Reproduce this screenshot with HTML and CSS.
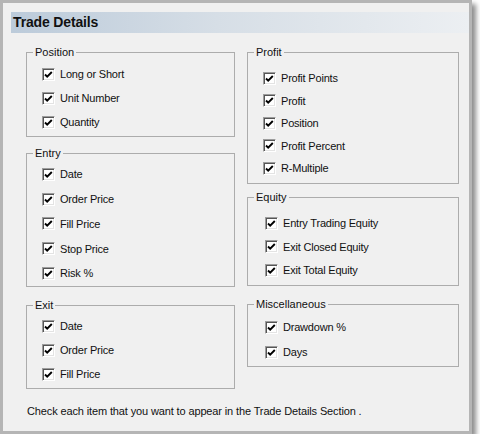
FILE: index.html
```html
<!DOCTYPE html>
<html>
<head>
<meta charset="utf-8">
<link rel="stylesheet" href="styles.css">
</head>
<body>
<div class="window">
  <div class="header">Trade Details</div>
  <div class="columns">
    <div class="col col-left">
      <fieldset class="group g-position">
        <legend>Position</legend>
        <div class="row"><span class="cb"><svg viewBox="0 0 13 13" width="13" height="13"><path d="M3 6.5 L5.2 8.7 L9.8 4" /></svg></span>Long or Short</div>
        <div class="row"><span class="cb"><svg viewBox="0 0 13 13" width="13" height="13"><path d="M3 6.5 L5.2 8.7 L9.8 4" /></svg></span>Unit Number</div>
        <div class="row"><span class="cb"><svg viewBox="0 0 13 13" width="13" height="13"><path d="M3 6.5 L5.2 8.7 L9.8 4" /></svg></span>Quantity</div>
      </fieldset>
      <fieldset class="group g-entry">
        <legend>Entry</legend>
        <div class="row"><span class="cb"><svg viewBox="0 0 13 13" width="13" height="13"><path d="M3 6.5 L5.2 8.7 L9.8 4" /></svg></span>Date</div>
        <div class="row"><span class="cb"><svg viewBox="0 0 13 13" width="13" height="13"><path d="M3 6.5 L5.2 8.7 L9.8 4" /></svg></span>Order Price</div>
        <div class="row"><span class="cb"><svg viewBox="0 0 13 13" width="13" height="13"><path d="M3 6.5 L5.2 8.7 L9.8 4" /></svg></span>Fill Price</div>
        <div class="row"><span class="cb"><svg viewBox="0 0 13 13" width="13" height="13"><path d="M3 6.5 L5.2 8.7 L9.8 4" /></svg></span>Stop Price</div>
        <div class="row"><span class="cb"><svg viewBox="0 0 13 13" width="13" height="13"><path d="M3 6.5 L5.2 8.7 L9.8 4" /></svg></span>Risk %</div>
      </fieldset>
      <fieldset class="group g-exit">
        <legend>Exit</legend>
        <div class="row"><span class="cb"><svg viewBox="0 0 13 13" width="13" height="13"><path d="M3 6.5 L5.2 8.7 L9.8 4" /></svg></span>Date</div>
        <div class="row"><span class="cb"><svg viewBox="0 0 13 13" width="13" height="13"><path d="M3 6.5 L5.2 8.7 L9.8 4" /></svg></span>Order Price</div>
        <div class="row"><span class="cb"><svg viewBox="0 0 13 13" width="13" height="13"><path d="M3 6.5 L5.2 8.7 L9.8 4" /></svg></span>Fill Price</div>
      </fieldset>
    </div>
    <div class="col col-right">
      <fieldset class="group g-profit">
        <legend>Profit</legend>
        <div class="row"><span class="cb"><svg viewBox="0 0 13 13" width="13" height="13"><path d="M3 6.5 L5.2 8.7 L9.8 4" /></svg></span>Profit Points</div>
        <div class="row"><span class="cb"><svg viewBox="0 0 13 13" width="13" height="13"><path d="M3 6.5 L5.2 8.7 L9.8 4" /></svg></span>Profit</div>
        <div class="row"><span class="cb"><svg viewBox="0 0 13 13" width="13" height="13"><path d="M3 6.5 L5.2 8.7 L9.8 4" /></svg></span>Position</div>
        <div class="row"><span class="cb"><svg viewBox="0 0 13 13" width="13" height="13"><path d="M3 6.5 L5.2 8.7 L9.8 4" /></svg></span>Profit Percent</div>
        <div class="row"><span class="cb"><svg viewBox="0 0 13 13" width="13" height="13"><path d="M3 6.5 L5.2 8.7 L9.8 4" /></svg></span>R-Multiple</div>
      </fieldset>
      <fieldset class="group g-equity">
        <legend>Equity</legend>
        <div class="row"><span class="cb"><svg viewBox="0 0 13 13" width="13" height="13"><path d="M3 6.5 L5.2 8.7 L9.8 4" /></svg></span>Entry Trading Equity</div>
        <div class="row"><span class="cb"><svg viewBox="0 0 13 13" width="13" height="13"><path d="M3 6.5 L5.2 8.7 L9.8 4" /></svg></span>Exit Closed Equity</div>
        <div class="row"><span class="cb"><svg viewBox="0 0 13 13" width="13" height="13"><path d="M3 6.5 L5.2 8.7 L9.8 4" /></svg></span>Exit Total Equity</div>
      </fieldset>
      <fieldset class="group g-misc">
        <legend>Miscellaneous</legend>
        <div class="row"><span class="cb"><svg viewBox="0 0 13 13" width="13" height="13"><path d="M3 6.5 L5.2 8.7 L9.8 4" /></svg></span>Drawdown %</div>
        <div class="row"><span class="cb"><svg viewBox="0 0 13 13" width="13" height="13"><path d="M3 6.5 L5.2 8.7 L9.8 4" /></svg></span>Days</div>
      </fieldset>
    </div>
  </div>
  <p class="footer">Check each item that you want to appear in the Trade Details Section .</p>
</div>
</body>
</html>
```
FILE: styles.css
```css
html, body {
  margin: 0;
  padding: 0;
  background: #ffffff;
}

body {
  font-family: "Liberation Sans", Arial, sans-serif;
  font-size: 11px;
  color: #111;
}

.window {
  box-sizing: border-box;
  width: 472px;
  height: 434px;
  border: 3px solid #b5b5b5;
  background: #f0f0f0;
  padding: 9px 0 0 8px;
  box-shadow: 4px 4px 5px rgba(0, 0, 0, 0.45);
}

.header {
  height: 21px;
  line-height: 21px;
  padding-left: 2px;
  font-size: 14px;
  font-weight: bold;
  letter-spacing: -0.15px;
  color: #111;
  background: linear-gradient(90deg, #bccbda 0%, #d6dee6 45%, #eceff2 100%);
}

.columns {
  display: grid;
  grid-template-columns: 209px 212px;
  column-gap: 12px;
  margin: 12px 0 0 15px;
  align-items: start;
}

.col {
  display: flex;
  flex-direction: column;
}

.group {
  box-sizing: border-box;
  margin: 0;
  padding: 0 0 2px 0;
  border: 1px solid #acacac;
  min-width: 0;
}

.group legend {
  margin-left: 6px;
  padding: 0 2px;
  line-height: 14px;
  height: 14px;
}

.row {
  display: flex;
  align-items: center;
  height: 24px;
  padding-left: 15px;
  letter-spacing: -0.2px;
}

.cb {
  box-sizing: border-box;
  width: 13px;
  height: 13px;
  flex: none;
  margin-right: 5px;
  background: #fff;
  border: 1px solid;
  border-color: #9c9c9c #ffffff #ffffff #9c9c9c;
  box-shadow: inset 1px 1px 0 #555, inset -1px -1px 0 #e3e3e3;
  display: flex;
}

.cb svg {
  margin: -1px;
  width: 13px;
  height: 13px;
}

.cb path {
  fill: none;
  stroke: #000;
  stroke-width: 1.9;
}

.g-position { padding-top: 3px; }
.g-entry { margin-top: 9px; padding-top: 2px; padding-bottom: 0.5px; }
.g-entry .row { height: 24.75px; }
.g-exit { margin-top: 11px; padding-top: 2px; padding-bottom: 2px; }

.g-profit { padding-top: 7.75px; padding-bottom: 3.75px; }
.g-profit .row { height: 22.5px; }
.g-equity { margin-top: 6px; padding-top: 7.5px; padding-bottom: 3px; }
.g-equity .row { height: 23.5px; }
.g-equity .row, .g-misc .row { padding-left: 17px; }
.g-misc { margin-top: 11px; padding-top: 3.5px; padding-bottom: 1.5px; }
.g-misc .row { height: 25px; }

.footer {
  margin: 15px 0 0 16px;
  line-height: 14px;
  letter-spacing: -0.13px;
}
```
